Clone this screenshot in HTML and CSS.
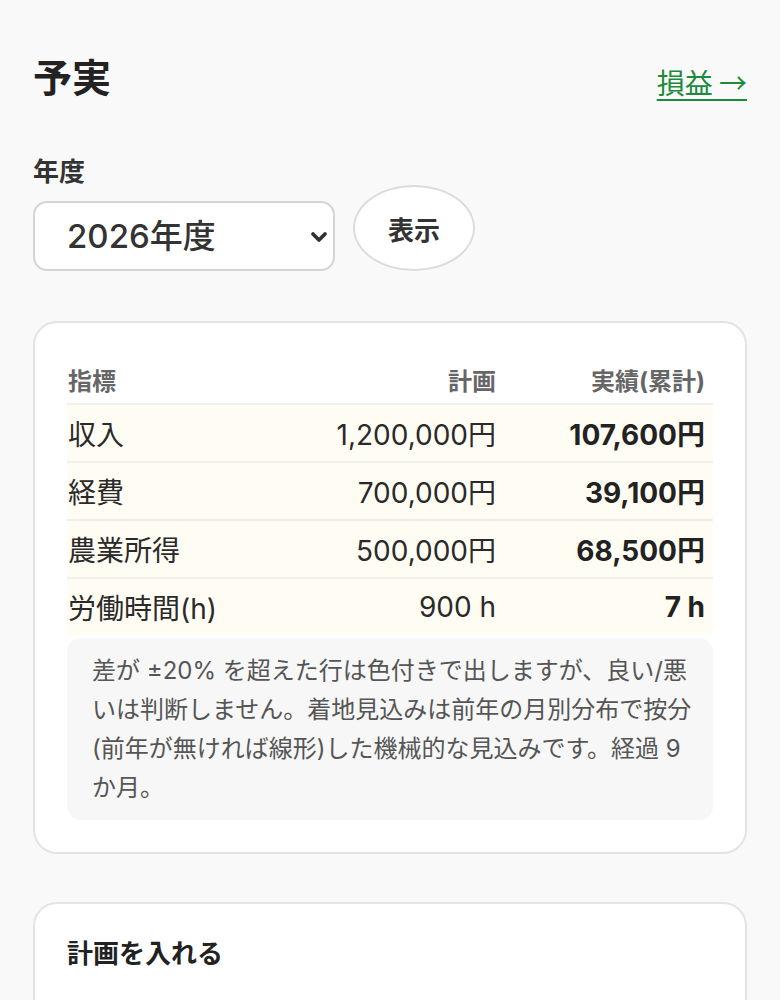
FILE: index.html
```html
<!DOCTYPE html>
<html lang="ja">
<head>
<meta charset="utf-8">
<title>予実</title>
<link rel="stylesheet" href="styles.css">
</head>
<body>
<main class="page">
  <header class="top">
    <h1 class="title">予実</h1>
    <a class="link" href="#">損益 →</a>
  </header>

  <form class="form">
    <div class="field">
      <label class="label" for="year">年度</label>
      <div class="select-wrap">
        <select id="year" class="select">
          <option>2026年度</option>
        </select>
        <svg class="chev" viewBox="0 0 18 12" width="18" height="12"><path d="M3 3 L9 9 L15 3" fill="none" stroke="#333" stroke-width="3.8" stroke-linecap="round" stroke-linejoin="round"/></svg>
      </div>
    </div>
    <button type="button" class="btn">表示</button>
  </form>

  <section class="card">
    <table class="tbl">
      <colgroup><col><col class="c2"><col class="c3"></colgroup>
      <thead>
        <tr><th class="l">指標</th><th class="r">計画</th><th class="r last">実績(累計)</th></tr>
      </thead>
      <tbody>
        <tr><td class="l">収入</td><td class="r">1,200,000円</td><td class="r last b">107,600円</td></tr>
        <tr><td class="l">経費</td><td class="r">700,000円</td><td class="r last b">39,100円</td></tr>
        <tr><td class="l">農業所得</td><td class="r">500,000円</td><td class="r last b">68,500円</td></tr>
        <tr><td class="l">労働時間(h)</td><td class="r">900 h</td><td class="r last b">7 h</td></tr>
      </tbody>
    </table>
    <p class="note">差が ±20% を超えた行は色付きで出しますが、良い/悪いは判断しません。着地見込みは前年の月別分布で按分(前年が無ければ線形)した機械的な見込みです。経過 9 か月。</p>
  </section>

  <section class="card card2">
    <h2 class="sub">計画を入れる</h2>
  </section>
</main>
</body>
</html>
```

FILE: styles.css
```css
html, body {
  margin: 0;
  padding: 0;
  background: #f9f9f9;
}
body {
  font-family: Inter, "Noto Sans CJK JP", sans-serif;
  color: #222;
}
.page {
  padding: 54px 33px 0;
}
.top {
  display: flex;
  justify-content: space-between;
  align-items: center;
  height: 48px;
}
.title {
  margin: 0;
  font-size: 39px;
  line-height: 48px;
  font-weight: 700;
  color: #222;
}
.link {
  font-family: "Noto Sans CJK JP", sans-serif;
  font-size: 28px;
  color: #1b8a3c;
  text-decoration: underline;
  text-underline-offset: 5px;
  text-decoration-thickness: 2px;
  margin-top: 8px;
}
.form {
  display: flex;
  align-items: flex-end;
  gap: 18px;
  margin-top: 56px;
}
.field {
  display: flex;
  flex-direction: column;
}
.label {
  font-size: 26px;
  font-weight: 700;
  line-height: 28px;
  color: #333;
  margin-bottom: 15px;
}
.select-wrap {
  position: relative;
  width: 302px;
  height: 70px;
}
.select {
  appearance: none;
  -webkit-appearance: none;
  width: 302px;
  height: 70px;
  box-sizing: border-box;
  border: 2px solid #d4d4d4;
  border-radius: 14px;
  background: #fff;
  padding: 0 0 0 32px;
  font-family: inherit;
  font-size: 33px;
  font-weight: 500;
  color: #333;
}
.chev {
  position: absolute;
  right: 7px;
  top: 30px;
  pointer-events: none;
}
.btn {
  width: 122px;
  height: 86px;
  box-sizing: border-box;
  border: 2px solid #dcdcdc;
  border-radius: 50%;
  background: #fff;
  font-family: inherit;
  font-size: 26px;
  font-weight: 700;
  color: #333;
  padding: 0;
}
.card {
  margin-top: 50px;
  background: #fff;
  border: 2px solid #e3e3e3;
  border-radius: 24px;
  padding: 32px;
}
.tbl {
  width: 100%;
  border-collapse: collapse;
}
.tbl col.c2 { width: 220px; }
.tbl col.c3 { width: 209px; }
.tbl th {
  height: 48px;
  font-size: 24px;
  font-weight: 700;
  color: #666;
  padding: 0;
  vertical-align: middle;
}
.tbl td {
  height: 56px;
  font-size: 28px;
  color: #2a2a2a;
  background: #fffcf4;
  border-top: 2px solid #f2efe8;
  padding: 0;
  vertical-align: middle;
}
.tbl .l { text-align: left; padding-left: 1px; }
.tbl .r { text-align: right; padding-right: 8px; }
.tbl .b { font-weight: 700; color: #222; }
.note {
  margin: 3px 0 0;
  background: #f7f7f7;
  border-radius: 14px;
  padding: 13px 18px 13px 25px;
  font-size: 24px;
  line-height: 39px;
  color: #555;
}
.card2 {
  margin-top: 48px;
  padding-bottom: 60px;
}
.sub {
  margin: 0;
  font-size: 26px;
  line-height: 36px;
  font-weight: 700;
  color: #222;
}
```
